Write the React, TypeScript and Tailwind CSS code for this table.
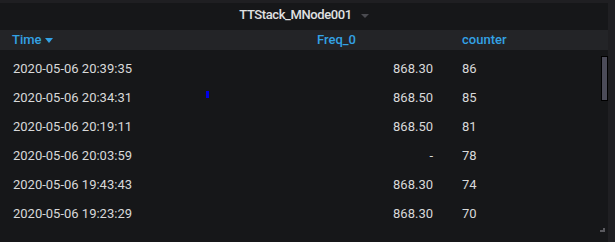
import * as React from 'react';

const rows = [
  { time: '2020-05-06 20:39:35', freq: '868.30', counter: '86' },
  { time: '2020-05-06 20:34:31', freq: '868.50', counter: '85' },
  { time: '2020-05-06 20:19:11', freq: '868.50', counter: '81' },
  { time: '2020-05-06 20:03:59', freq: '-', counter: '78' },
  { time: '2020-05-06 19:43:43', freq: '868.30', counter: '74' },
  { time: '2020-05-06 19:23:29', freq: '868.30', counter: '70' },
];

export default function App() {
  return (
    <div
      className="h-[242px] w-[615px] overflow-hidden bg-[#1f1f22] pt-[3px] text-[13px] text-[#d8d9da]"
      style={{ fontFamily: 'Roboto, "Liberation Sans", sans-serif' }}
    >
      <div className="relative flex h-[239px] w-[608px] flex-col bg-[#161719]">
        {/* Panel title */}
        <div className="flex h-[27px] items-center justify-center gap-[9px]">
          <span className="mb-[3px] text-[13px] font-medium tracking-[-0.4px] text-[#e0e1e2]">TTStack_MNode001</span>
          <span className="mb-[2px] h-0 w-0 border-x-[4px] border-t-[4px] border-x-transparent border-t-[#4a4b50]" />
        </div>

        {/* Table header */}
        <div className="flex h-[20px] items-center bg-[#232427] font-medium text-[#33a2e5]">
          <div className="flex w-[305px] items-center gap-[3px] pl-[12px]">
            <span>Time</span>
            <span className="mt-[1px] h-0 w-0 border-x-[4px] border-t-[5px] border-x-transparent border-t-[#33a2e5]" />
          </div>
          <div className="w-[145px] pl-[12px]">Freq_0</div>
          <div className="pl-[12px]">counter</div>
        </div>

        {/* Rows */}
        <div className="flex flex-col pt-[4px]">
          {rows.map((r) => (
            <div key={r.time} className="flex h-[29px] items-center">
              <div className="w-[305px] pl-[13px]">{r.time}</div>
              <div className="w-[145px] pr-[17px] text-right">{r.freq}</div>
              <div className="pl-[12px]">{r.counter}</div>
            </div>
          ))}
        </div>

        {/* Stray marker */}
        <div className="absolute left-[206px] top-[88px] h-[7px] w-[3px] bg-[#0000e6]" />

        {/* Scrollbar */}
        <div className="absolute left-[601px] top-[53px] h-[45px] w-[7px] border border-black bg-[#4b4b58]" />

        {/* Resize handle */}
        <div className="absolute left-[600px] top-[225px] h-[4px] w-[5px] bg-[#5a5a5f] [clip-path:polygon(100%_0,100%_100%,0_100%,0_50%,60%_50%,60%_0)]" />
      </div>
    </div>
  );
}
